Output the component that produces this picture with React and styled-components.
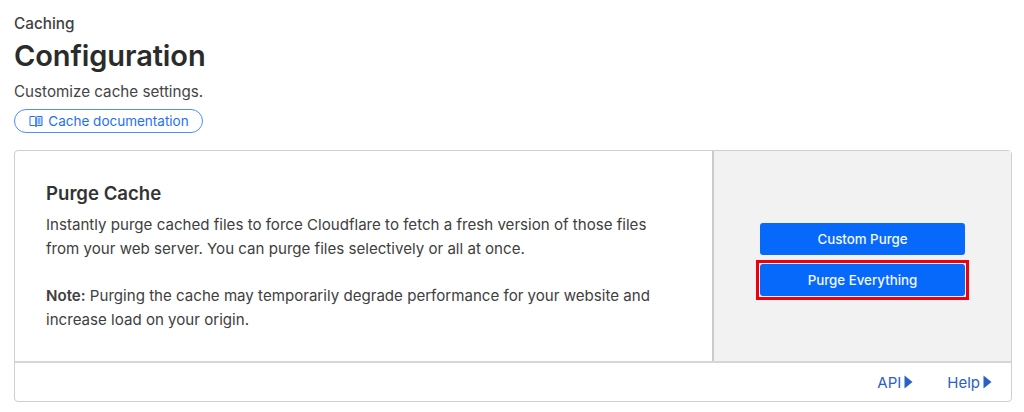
import React from 'react'
import styled, { createGlobalStyle } from 'styled-components'

const GlobalStyle = createGlobalStyle`
  html, body {
    margin: 0;
    padding: 0;
    background: #fff;
    font-family: Inter, "Liberation Sans", sans-serif;
    color: #313131;
  }
`

const Page = styled.div`
  width: 1024px;
  height: 412px;
  box-sizing: border-box;
  padding: 14px 12px 0 14px;
  overflow: hidden;
`

const Crumb = styled.div`
  font-size: 15.3px;
  line-height: 19px;
  font-weight: 500;
  color: #3f3f3f;
`

const Title = styled.h1`
  margin: 4px 0 0;
  font-size: 29px;
  line-height: 38px;
  font-weight: 600;
  letter-spacing: -0.1px;
  color: #2b2b2b;
`

const Subtitle = styled.p`
  margin: 7px 0 0;
  font-size: 15.2px;
  line-height: 20px;
  color: #444;
`

const DocLink = styled.a`
  display: flex;
  align-items: center;
  justify-content: center;
  gap: 5px;
  width: 189px;
  height: 24px;
  margin-top: 7px;
  padding-left: 1px;
  box-sizing: border-box;
  border: 1px solid #4f8ef7;
  border-radius: 12px;
  font-size: 13.5px;
  color: #1f6ff2;
  text-decoration: none;
`

const Card = styled.section`
  margin-top: 17px;
  height: 252px;
  box-sizing: border-box;
  border: 1px solid #cfcfcf;
  border-radius: 4px;
  display: flex;
  flex-direction: column;
`

const CardBody = styled.div`
  flex: 1;
  display: flex;
  min-height: 0;
`

const Copy = styled.div`
  flex: 1;
  box-sizing: border-box;
  padding: 30px 31px 0;
`

const Heading = styled.h2`
  margin: 0;
  font-size: 18.6px;
  line-height: 24px;
  font-weight: 600;
  color: #333;
`

const Para = styled.p`
  margin: ${p => p.$top}px 0 0;
  width: 620px;
  font-size: 15.1px;
  line-height: 24px;
  color: #404040;
  strong { font-weight: 600; }
`

const Side = styled.div`
  width: 299px;
  box-sizing: border-box;
  border-left: 2px solid #cccccc;
  background: #f2f2f2;
  display: flex;
  flex-direction: column;
  align-items: center;
  justify-content: center;
  gap: 9px;
  padding-top: 7px;
`

const Button = styled.button`
  position: relative;
  width: 205px;
  height: 32px;
  border: none;
  border-radius: 3px;
  background: #0669fb;
  color: #f4f8ff;
  font-family: inherit;
  font-size: 13.3px;
  font-weight: 500;
  ${p => p.$highlight && `
    &::after {
      content: '';
      position: absolute;
      inset: -4px;
      border: 3px solid #f0000f;
    }
  `}
`

const Footer = styled.footer`
  height: 40px;
  box-sizing: border-box;
  border-top: 2px solid #d6d6d6;
  display: flex;
  align-items: center;
  justify-content: flex-end;
  gap: 34px;
  padding-right: 19px;
`

const FooterLink = styled.a`
  display: flex;
  align-items: center;
  gap: 3px;
  font-size: 15px;
  color: #2b5fc7;
  text-decoration: none;
`

const BookIcon = () => (
  <svg width="14" height="13" viewBox="0 0 14 13" fill="none" stroke="#1f6ff2" strokeWidth="1">
    <path d="M1 1.500h4.500c.9 0 1.500.5 1.500 1.300v8.700c0-.7-.6-1-1.500-1H1z" />
    <path d="M13 1.500H8.500C7.600 1.500 7 2 7 2.800v8.700c0-.7.6-1 1.500-1H13z" fill="#1f6ff2" fillOpacity=".18" />
    <path d="M8.800 4h2.500M8.800 6h2.500M8.800 8h2.500" />
  </svg>
)

const Caret = () => (
  <svg width="9" height="14" viewBox="0 0 9 14">
    <path d="M0.500 0.500 8.500 7 0.500 13.500z" fill="#2b5fc7" />
  </svg>
)

export default function App() {
  return (
    <>
      <GlobalStyle />
      <Page>
        <Crumb>Caching</Crumb>
        <Title>Configuration</Title>
        <Subtitle>Customize cache settings.</Subtitle>
        <DocLink href="#">
          <BookIcon />
          Cache documentation
        </DocLink>
        <Card>
          <CardBody>
            <Copy>
              <Heading>Purge Cache</Heading>
              <Para $top={8}>
                Instantly purge cached files to force Cloudflare to fetch a fresh version of those files from your web server. You can purge files selectively or all at once.
              </Para>
              <Para $top={23}>
                <strong>Note:</strong> Purging the cache may temporarily degrade performance for your website and increase load on your origin.
              </Para>
            </Copy>
            <Side>
              <Button>Custom Purge</Button>
              <Button $highlight>Purge Everything</Button>
            </Side>
          </CardBody>
          <Footer>
            <FooterLink href="#">API <Caret /></FooterLink>
            <FooterLink href="#">Help <Caret /></FooterLink>
          </Footer>
        </Card>
      </Page>
    </>
  )
}
